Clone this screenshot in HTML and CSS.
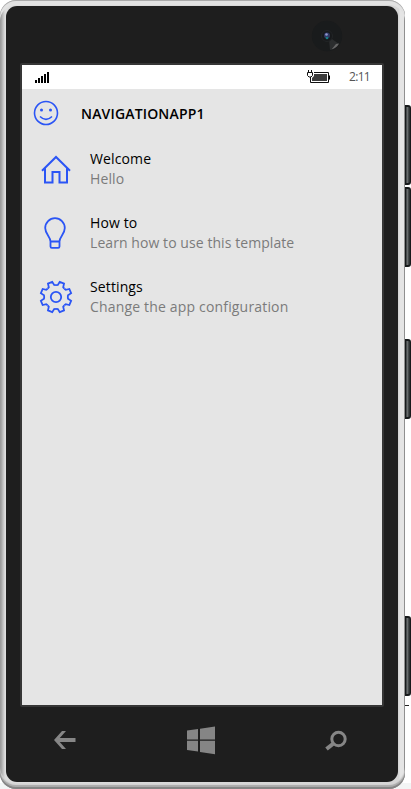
FILE: index.html
```html
<!DOCTYPE html>
<html lang="en">
<head>
<meta charset="utf-8">
<title>NavigationApp1</title>
<link rel="stylesheet" href="styles.css">
</head>
<body>
<div class="device">
  <div class="shell">
    <div class="face">
      <div class="forehead">
        <svg class="camera" width="32" height="32" viewBox="0 0 32 32">
          <circle cx="16" cy="16" r="15.2" fill="#191b1c"/>
          <path d="M18 20l3-1 7 5q-3 5-9 6z" fill="#2b2d2e"/>
          <path d="M20.500 29.500q5-1.500 7.500-6l-3 .5z" fill="#666"/>
          <circle cx="16" cy="16" r="5.500" fill="#17191b" stroke="#222426"/>
          <circle cx="16" cy="15.500" r="3" fill="#303862"/>
          <circle cx="15.500" cy="14.500" r="1.300" fill="#9197ce"/>
          <circle cx="16" cy="18" r="1.300" fill="#167c83"/>
        </svg>
      </div>
      <main class="screen">
        <div class="status">
          <svg class="signal" width="15" height="12" viewBox="0 0 15 12">
            <path d="M0 9h2v3H0zM3 7h2v5H3zM6 5h2v7H6zM9 3h2v9H9zM12 1h2v11h-2z"/>
          </svg>
          <svg class="battery" width="24" height="13" viewBox="0 0 24 13">
            <path d="M1.500 0v3M4.500 0v3M.5 2.500h5v3L4 7H2L.5 5.500zM3.500 7v5.500h18V2.500H7" fill="none" stroke="#111"/>
            <path d="M22 5.500h1v4h-1z"/>
            <path d="M7 4h13v7H5V8l2-2z" fill="#3c3c3c"/>
          </svg>
          <span class="clock">2:11</span>
        </div>
        <header class="title">
          <svg width="26" height="26" viewBox="0 0 26 26" class="icon">
            <circle cx="13" cy="13" r="11.500"/>
            <path d="M7 16.500q6 5.800 12 0"/>
            <circle cx="8.500" cy="10" r="1.500" class="dot"/><circle cx="17.500" cy="10" r="1.500" class="dot"/>
          </svg>
          <h1>NAVIGATIONAPP1</h1>
        </header>
        <ul class="menu">
          <li class="item">
            <svg width="36" height="36" viewBox="0 -1 36 36" class="icon thick">
              <path d="M4 18.700L18 5l14 13.700M7 16.500V30.500h7.500V20h7v10.500H29V16.500"/>
            </svg>
            <div><div class="name">Welcome</div><div class="desc">Hello</div></div>
          </li>
          <li class="item">
            <svg width="36" height="36" viewBox="1 -1 36 36" class="icon bulb">
              <path d="M13.500 25.500c0-5-5.300-7.500-5.300-13.500a9.800 9.800 0 0 1 19.600 0c0 6-5.300 8.500-5.300 13.500v5q0 1.300-1.300 1.300h-6.400q-1.300 0-1.300-1.300zh9"/>
            </svg>
            <div><div class="name">How to</div><div class="desc wide">Learn how to use this template</div></div>
          </li>
          <li class="item">
            <svg width="36" height="36" viewBox="-18 -18 36 36" class="icon bulb">
              <defs><path id="tooth" d="M-4.500-10.900L-2.900-11.800-2.300-15.400H2.300L2.900-11.800 4.500-10.900"/></defs>
              <use href="#tooth" transform="rotate(22.500)"/><use href="#tooth" transform="rotate(67.500)"/>
              <use href="#tooth" transform="rotate(112.500)"/><use href="#tooth" transform="rotate(157.500)"/>
              <use href="#tooth" transform="rotate(202.500)"/><use href="#tooth" transform="rotate(247.500)"/>
              <use href="#tooth" transform="rotate(292.500)"/><use href="#tooth" transform="rotate(337.500)"/>
              <circle r="5.200"/>
            </svg>
            <div><div class="name">Settings</div><div class="desc wider">Change the app configuration</div></div>
          </li>
        </ul>
      </main>
      <nav class="keys">
        <svg width="24" height="30" viewBox="0 0 24 30"><path d="M1 15L9 6h4L6.800 13H22.500v4H6.800L13 24H9z" fill="#868686"/></svg>
        <svg width="30" height="30" viewBox="0 0 30 30"><path d="M1 5.500L12 4v10.500H1zM14 3.700L29 1.500v13H14zM1 15.700h11V26.500L1 25zM14 15.700h15V29.200L14 27z" fill="#858585"/></svg>
        <svg width="24" height="30" viewBox="0 0 24 30"><circle cx="14.500" cy="14" r="6.700" fill="none" stroke="#868686" stroke-width="3"/><path d="M9.800 18.200L2.500 24" stroke="#868686" stroke-width="4"/></svg>
      </nav>
    </div>
  </div>
  <div class="edge">
    <i class="key up"></i><i class="key down"></i><i class="key power"></i><i class="key shutter"></i><i class="tick"></i><i class="floor"></i>
  </div>
</div>
</body>
</html>
```
FILE: styles.css
```css
* { box-sizing: border-box; }
body { margin: 0; background: #fff; font-family: "Open Sans", "Noto Sans", sans-serif; overflow: hidden; }
.device { display: flex; width: 411px; height: 789px; background: linear-gradient(#fff 783px, #f3f5f5 783px); }
.shell {
  width: 405px; height: 789px; padding: 6px 7px 7px 6px; border-radius: 16px;
  background: linear-gradient(90deg, #8c8c8c 0, #b0b0b0 2px, #dedede 5px, #dedede 6px, #d5d5d5 399px, #e5e5e5 400px, #e5e5e5 404px, #858585 404px);
  box-shadow: inset 0 1px #aaa, inset 0 5px #e2e2e2, inset 0 -2px #858585, inset 0 -4px 1px #aaa, inset 0 -6px 1px #d6d6d6;
}
.face { height: 776px; padding: 0 14px; border-radius: 11px; background: #1e1e1e; display: flex; flex-direction: column; }
.forehead { height: 57px; padding: 14px 41px 0 0; display: flex; justify-content: flex-end; }
.camera { display: block; }
.screen { height: 644px; width: 364px; border: 2px solid #363636; border-radius: 2px; background: #e5e5e5; }
.status { height: 24px; background: #fff; display: flex; align-items: center; padding: 0 12px 0 13px; }
.signal { margin-bottom: 1px; }
.battery { margin-left: auto; margin-right: 18px; margin-bottom: 1px; }
.clock { font-size: 12px; line-height: 24px; color: #555; letter-spacing: -.7px; }
.title { height: 48px; display: flex; align-items: center; gap: 22px; padding-left: 11px; }
h1 { margin: 0; font-size: 14px; font-weight: 600; line-height: 20px; padding-top: 1px; letter-spacing: .17px; color: #000; }
.icon { flex: none; fill: none; stroke: #2b55f5; stroke-width: 1.6; }
.thick { stroke-width: 2; }
.bulb { stroke-width: 1.8; }
.dot { fill: #2b55f5; stroke: none; }
.menu { list-style: none; margin: 0; padding: 0 0 0 16px; }
.item { height: 64px; display: flex; align-items: center; gap: 16px; }
.name, .desc { font-size: 14px; line-height: 20px; white-space: nowrap; color: #000; letter-spacing: .12px; }
.desc { color: #7b7b7b; }
.wide { letter-spacing: .07px; }
.wider { letter-spacing: .17px; }
.keys { flex: 1; display: flex; align-items: center; justify-content: space-between; padding: 0 36px 9px 33px; }
.edge { width: 6px; display: flex; flex-direction: column; align-items: flex-start; }
.key { width: 6px; height: 80px; border: 2px solid #171a1b; border-width: 2px 1px; border-radius: 0 3px 3px 0; background: linear-gradient(90deg, #333738, #6c7071 35%, #3a3e3f 70%, #25292a); }
.up { margin-top: 105px; }
.down { margin-top: 2px; }
.power { margin-top: 72px; }
.shutter { margin-top: 197px; }
.tick { width: 4px; height: 1px; margin-top: 9px; background: #222; }
.floor { flex: 1; }
```
